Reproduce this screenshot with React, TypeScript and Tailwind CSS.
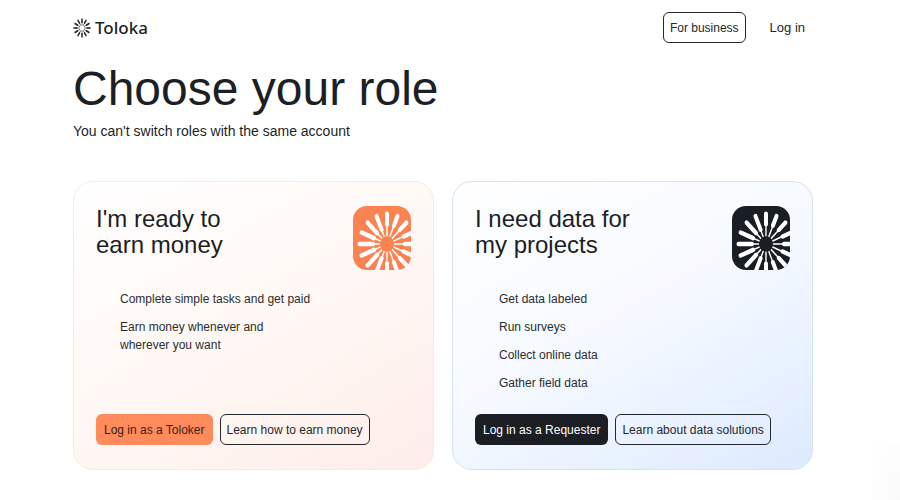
import React from "react";

const outlined =
  "flex h-[31px] items-center whitespace-nowrap rounded-md border border-[#25282c] px-1.5 text-xs text-[#25282c]";

const burstAngles = Array.from({ length: 16 }, (_, i) => i * 22.5);
const logoAngles = Array.from({ length: 12 }, (_, i) => i * 30);

function Burst({ color, label }: { color: string; label: string }) {
  return (
    <svg viewBox="0 0 58 64" className="h-16 w-[58px] shrink-0 rounded-[14px]" role="img" aria-label={label}>
      <rect width="58" height="64" fill={color} />
      <g transform="translate(34 38) scale(1 1.1)">
        {burstAngles.map((a) => (
          <g key={a} transform={`rotate(${a})`} stroke="#fff">
            <path d="M0 -6V-20" strokeWidth="1.4" />
            <path
              d={a > 200 && a < 340 ? "M0 -14V-27.5" : "M0 -18V-27.5"}
              strokeWidth="4"
              strokeLinecap="round"
            />
          </g>
        ))}
        <circle r="7" fill={color} />
      </g>
    </svg>
  );
}

function Logo() {
  return (
    <a href="#" className="flex items-center gap-1 text-[#1c1f24]">
      <svg viewBox="-9 -10 18 20" className="h-5 w-[18px]" aria-hidden="true">
        <g transform="scale(1 1.1)" stroke="currentColor">
          {logoAngles.map((a) => (
            <g key={a} transform={`rotate(${a})`}>
              <path d="M0 -3V-6" strokeWidth="0.5" />
              <path d="M0 -4.6V-8.6" strokeWidth="1.4" />
            </g>
          ))}
          <circle r="2.9" fill="none" strokeWidth="0.4" />
        </g>
      </svg>
      <span className="font-['Noto_Sans',sans-serif] text-[17px] font-medium leading-6">Toloka</span>
    </a>
  );
}

type CardProps = {
  title: [string, string];
  color: string;
  items: string[];
  primary: string;
  secondary: string;
  surface: string;
  button: string;
};

function RoleCard({ title, color, items, primary, secondary, surface, button }: CardProps) {
  return (
    <section className={`flex min-h-[289px] flex-col rounded-[20px] border px-[22px] pb-6 pt-6 ${surface}`}>
      <div className="flex items-start justify-between">
        <h2 className="text-2xl leading-[26px]">
          {title[0]}
          <br />
          {title[1]}
        </h2>
        <Burst color={color} label={title.join(" ")} />
      </div>
      <ul className="mt-5 flex flex-col gap-2.5 pl-6 text-xs leading-[18px] text-[#2b2d31]">
        {items.map((item) => (
          <li key={item} className="whitespace-pre-line">
            {item}
          </li>
        ))}
      </ul>
      <div className="mt-auto flex gap-[7px]">
        <button className={`h-[31px] whitespace-nowrap rounded-md px-2 text-xs ${button}`}>{primary}</button>
        <a href="#" className={outlined}>
          {secondary}
        </a>
      </div>
    </section>
  );
}

export default function App() {
  return (
    <div className="relative min-h-screen bg-white pl-[73px] pr-[87px] font-['Liberation_Sans',Arial,sans-serif] text-[#1c1f24]">
      <header className="flex items-center justify-between pt-3">
        <Logo />
        <nav className="flex items-center gap-6 pr-2">
          <a href="#" className={outlined}>
            For business
          </a>
          <a href="#" className="text-[13px] text-[#25282c]">
            Log in
          </a>
        </nav>
      </header>
      <main>
        <h1 className="mt-4 text-5xl leading-[60px]">Choose your role</h1>
        <p className="mt-0.5 text-sm leading-5">You can't switch roles with the same account</p>
        <div className="mt-10 grid grid-cols-2 gap-[18px]">
          <RoleCard
            title={["I'm ready to", "earn money"]}
            color="#fb8251"
            items={["Complete simple tasks and get paid", "Earn money whenever and\nwherever you want"]}
            primary="Log in as a Toloker"
            secondary="Learn how to earn money"
            surface="border-[#f6e9e6] bg-linear-[150deg] from-white via-[#fff8f5] to-[#feede8]"
            button="bg-[#ff8a5c] text-[#40211a]"
          />
          <RoleCard
            title={["I need data for", "my projects"]}
            color="#191d24"
            items={["Get data labeled", "Run surveys", "Collect online data", "Gather field data"]}
            primary="Log in as a Requester"
            secondary="Learn about data solutions"
            surface="border-[#d5e3ee] bg-linear-[150deg] from-white via-[#f5f9ff] to-[#dceaff]"
            button="bg-[#1b1f24] text-white"
          />
        </div>
      </main>
      <div className="pointer-events-none absolute bottom-0 right-0 h-14 w-7 bg-radial-[at_100%_100%] from-[#fafafa] to-white" />
    </div>
  );
}
